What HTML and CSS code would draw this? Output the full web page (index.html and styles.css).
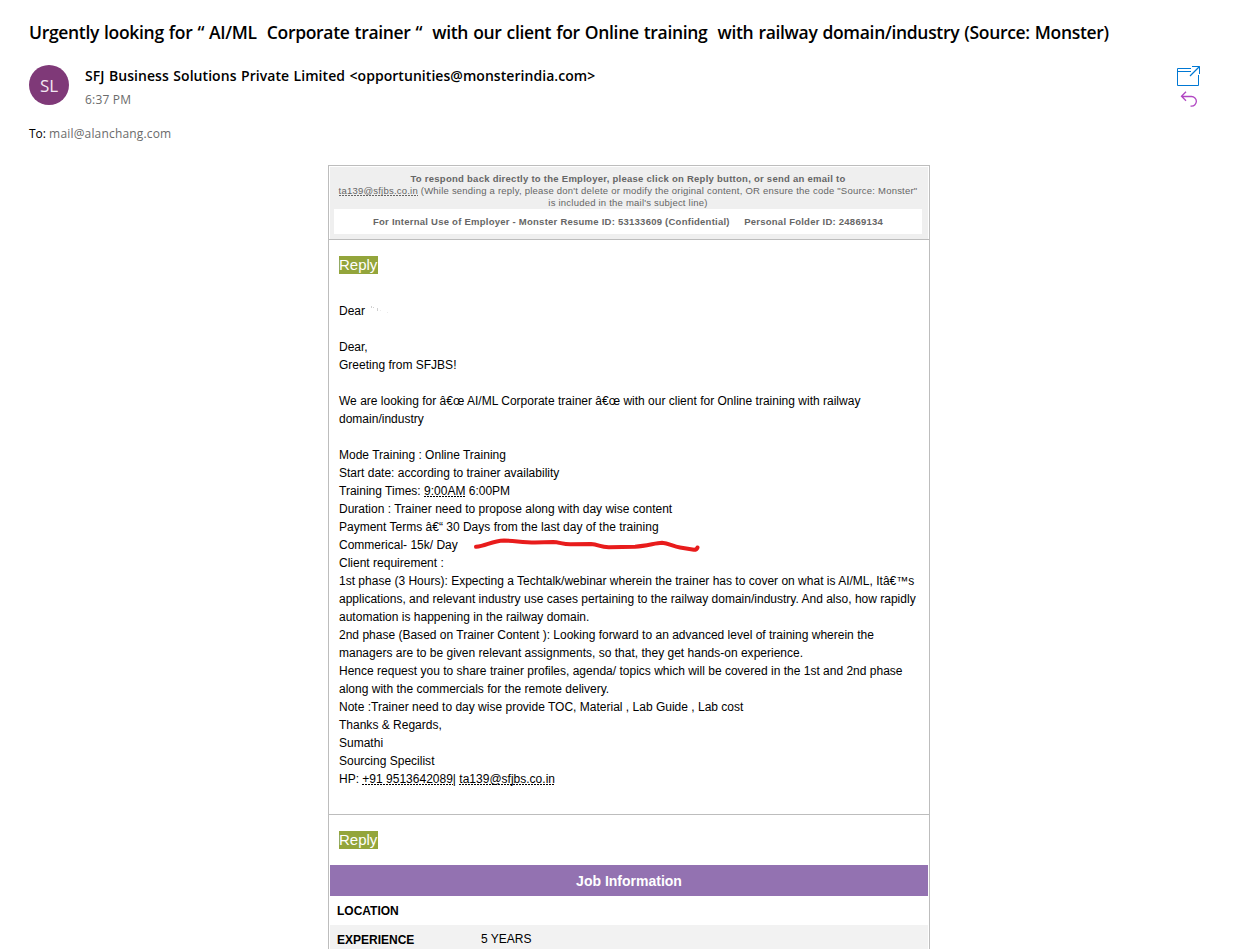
FILE: index.html
```html
<!DOCTYPE html>
<html lang="en">
  <head>
    <meta charset="UTF-8" />
    <meta name="viewport" content="width=device-width, initial-scale=1.0" />
    <title>Mail</title>
    <link rel="stylesheet" href="styles.css">
  </head>
  <body>
    <header class="mail-header">
      <h1>Urgently looking for “ AI/ML&nbsp; Corporate trainer “&nbsp; with our client for Online training&nbsp; with railway domain/industry (Source: Monster)</h1>
      <div class="sender">
        <div class="avatar">SL</div>
        <div class="sender-info">
          <div class="sender-name">SFJ Business Solutions Private Limited &lt;opportunities@monsterindia.com&gt;</div>
          <div class="sender-time">6:37 PM</div>
        </div>
        <div class="actions">
          <svg class="icon-window" width="24" height="22" viewBox="0 0 24 22" fill="none" stroke="#0078d4">
            <path d="M14 2.500H.5v17h21V9M.5 5.500H14M15 .5h7.500V8" />
            <path d="M13 10l9.500-9.500" stroke-width="1.3" />
          </svg>
          <svg class="icon-reply" width="18" height="18" viewBox="0 0 18 18" fill="none" stroke="#b146c2" stroke-width="1.3">
            <path d="M6 .8L1.500 5.300L6 9.800M1.500 5.500H11.500a4.700 4.700 0 0 1 0 9.700H10.500" />
          </svg>
        </div>
      </div>
      <div class="to">To: <span>mail@alanchang.com</span></div>
    </header>

    <main class="message">
      <section class="notice">
        <p>
          <b>To respond back directly to the Employer, please click on Reply button, or send an email to</b><br>
          <a>ta139@sfjbs.co.in</a> (While sending a reply, please don't delete or modify the original content, OR ensure the code "Source: Monster"<br>
          is included in the mail's subject line)
        </p>
        <div class="internal">For Internal Use of Employer - Monster Resume ID: 53133609 (Confidential) &nbsp; &nbsp; Personal Folder ID: 24869134</div>
      </section>

      <section class="content">
        <span class="reply">Reply</span>
        <div class="text">
          Dear
          <svg class="erased" width="20" height="10" viewBox="0 0 20 10" fill="none" stroke="#d0d0d0">
            <path d="M2.500 1v2M4.500 2v1M8.500 3v3" />
            <path d="M18.500 7v1M11 5.500h1" stroke="#ececec" />
          </svg><br>
          <br>
          Dear,<br>
          Greeting from SFJBS!<br>
          <br>
          We are looking for â€œ AI/ML Corporate trainer â€œ with our client for Online training with railway<br>
          domain/industry<br>
          <br>
          Mode Training : Online Training<br>
          Start date: according to trainer availability<br>
          Training Times: <a>9:00AM</a> 6:00PM<br>
          Duration : Trainer need to propose along with day wise content<br>
          Payment Terms â€“ 30 Days from the last day of the training<br>
          <span class="commercial">Commerical- 15k/ Day
            <svg class="scribble" width="228" height="16" viewBox="0 0 228 16" fill="none" stroke="#e81c1c" stroke-width="4" stroke-linecap="round" stroke-linejoin="round">
              <path d="M3 9.800C13 9 19 3.800 31 3.500C42 3.800 50 5.500 62 5.500L80 5C87 5.300 90 7.500 98 7.300L118 7C126 7.500 127 10.300 136 10.200L162 9.700C174 9.200 182 6 189 5.800C196 6.300 200 9.500 207 10.500L221 12.800C223 12.800 224 12 224.500 10.500" />
            </svg>
          </span><br>
          Client requirement :<br>
          1st phase (3 Hours): Expecting a Techtalk/webinar wherein the trainer has to cover on what is AI/ML, Itâ€™s<br>
          applications, and relevant industry use cases pertaining to the railway domain/industry. And also, how rapidly<br>
          automation is happening in the railway domain.<br>
          2nd phase (Based on Trainer Content ): Looking forward to an advanced level of training wherein the<br>
          managers are to be given relevant assignments, so that, they get hands-on experience.<br>
          Hence request you to share trainer profiles, agenda/ topics which will be covered in the 1st and 2nd phase<br>
          along with the commercials for the remote delivery.<br>
          Note :Trainer need to day wise provide TOC, Material , Lab Guide , Lab cost<br>
          Thanks &amp; Regards,<br>
          Sumathi<br>
          Sourcing Specilist<br>
          HP: <a>+91 9513642089</a>| <a>ta139@sfjbs.co.in</a>
        </div>
      </section>

      <section class="job">
        <span class="reply">Reply</span>
        <h2>Job Information</h2>
        <div class="job-row"><b>LOCATION</b></div>
        <div class="job-row shaded"><b>EXPERIENCE</b><span>5 YEARS</span></div>
      </section>
    </main>
  </body>
</html>
```
FILE: styles.css
```css
/* General styles */
* {
  box-sizing: border-box;
}
body {
  margin: 0;
  height: 949px;
  overflow: hidden;
  background-color: #ffffff;
  color: #000;
  font-family: "Open Sans", sans-serif;
}

/* Mail header */
.mail-header {
  height: 165px;
  padding: 20px 37px 0 29px;
}
h1 {
  margin: 0;
  font-size: 17.5px;
  font-weight: 600;
  letter-spacing: -0.32px;
  word-spacing: 0.78px;
  line-height: 25px;
  white-space: nowrap;
}
.sender {
  display: flex;
  margin-top: 20px;
}
.avatar {
  width: 40px;
  height: 40px;
  border-radius: 50%;
  background-color: #7f3978;
  color: #f3e6f2;
  font-size: 17px;
  line-height: 41px;
  text-align: center;
}
.sender-info {
  flex-grow: 1;
  margin-left: 16px;
  padding-top: 1px;
}
.sender-name {
  font-size: 14px;
  font-weight: 600;
  letter-spacing: 0.05px;
  word-spacing: 0.8px;
  line-height: 20px;
}
.sender-time {
  margin-top: 5px;
  color: #6b6b6b;
  font-size: 12px;
  letter-spacing: 0.2px;
  line-height: 18px;
}
.actions {
  display: flex;
  flex-direction: column;
  width: 24px;
  padding-top: 1px;
}
.icon-reply {
  margin: 3px 0 0 3px;
}
.to {
  margin-top: 14px;
  font-size: 12px;
  line-height: 22px;
}
.to span {
  color: #6b6b6b;
  letter-spacing: 0.17px;
}

/* Message box */
.message {
  width: 602px;
  margin-left: 328px;
  border: 1px solid #bdbdbd;
  font-family: "Liberation Sans", Arial, sans-serif;
}
/* detected phone numbers, times and addresses */
.message a {
  background: repeating-linear-gradient(to right, currentColor 0 2px, transparent 2px 3px) 0 calc(100% - 1px) / 100% 1px no-repeat;
}
.notice {
  height: 72px;
  margin: 1px 1px 0;
  padding: 6px 6px 4px 4px;
  background-color: #efefef;
  color: #666;
  font-size: 9.5px;
  letter-spacing: 0.22px;
  text-align: center;
  white-space: nowrap;
}
.notice p {
  margin: 0;
  line-height: 12px;
}
.notice b {
  letter-spacing: 0.264px;
}
.notice a {
  background-position: 0 100%;
}
.internal {
  height: 25px;
  background-color: #fff;
  font-weight: bold;
  letter-spacing: 0.245px;
  line-height: 25px;
}
.reply {
  display: block;
  width: 39px;
  height: 18px;
  background-color: #93a53b;
  color: #fff;
  font-size: 15px;
  line-height: 18px;
}
.content {
  height: 576px;
  padding: 16px 10px 0;
  border-top: 1px solid #bdbdbd;
  border-bottom: 1px solid #bdbdbd;
}
.text {
  margin-top: 28px;
  font-size: 12px;
  letter-spacing: 0.005px;
  line-height: 18px;
  white-space: nowrap;
}
.erased {
  margin-left: 1px;
}
.commercial {
  position: relative;
}
.scribble {
  position: absolute;
  left: 134px;
  top: -1px;
}

/* Job table */
.job .reply {
  margin: 16px 0 16px 10px;
}
h2 {
  height: 31px;
  margin: 0 1px;
  background-color: #9372b1;
  color: #fff;
  font-size: 14px;
  line-height: 32px;
  text-align: center;
}
.job-row {
  display: flex;
  height: 29px;
  margin: 0 1px;
  padding-left: 7px;
  font-size: 12px;
  line-height: 29px;
}
.job-row b {
  width: 144px;
  padding-top: 1px;
}
.shaded {
  background-color: #f2f2f2;
}
```
